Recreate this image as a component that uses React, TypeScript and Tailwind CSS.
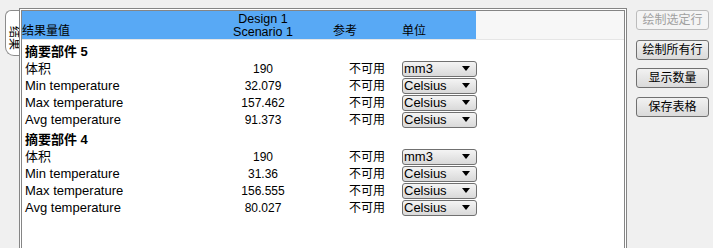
import React from 'react';

interface Row {
  name: string;
  value: string;
  unit: string;
}

interface Group {
  title: string;
  rows: Row[];
}

const groups: Group[] = [
  {
    title: '摘要部件 5',
    rows: [
      { name: '体积', value: '190', unit: 'mm3' },
      { name: 'Min temperature', value: '32.079', unit: 'Celsius' },
      { name: 'Max temperature', value: '157.462', unit: 'Celsius' },
      { name: 'Avg temperature', value: '91.373', unit: 'Celsius' },
    ],
  },
  {
    title: '摘要部件 4',
    rows: [
      { name: '体积', value: '190', unit: 'mm3' },
      { name: 'Min temperature', value: '31.36', unit: 'Celsius' },
      { name: 'Max temperature', value: '156.555', unit: 'Celsius' },
      { name: 'Avg temperature', value: '80.027', unit: 'Celsius' },
    ],
  },
];

const font = "font-['Liberation_Sans','Noto_Sans_CJK_SC',sans-serif]";

const UnitSelect: React.FC<{ value: string }> = ({ value }) => (
  <div className="flex h-[16px] w-[75px] items-center justify-between rounded-[3px] border border-[#707070] bg-gradient-to-b from-[#f4f4f4] to-[#d9d9d9] pl-[1px] pr-[6px] text-[13px] leading-none text-black">
    <span>{value}</span>
    <svg width="8" height="5" viewBox="0 0 8 5">
      <polygon points="0,0 8,0 4,5" fill="#000" />
    </svg>
  </div>
);

const SideButton: React.FC<{ label: string; disabled?: boolean }> = ({ label, disabled }) => (
  <div
    className={`flex h-[20px] w-[73px] items-center justify-center rounded-[3px] border text-[12px] leading-none ${
      disabled
        ? 'border-[#bcbcbc] bg-[#f4f4f4] text-[#a0a0a0]'
        : 'border-[#707070] bg-gradient-to-b from-[#f2f2f2] to-[#dadada] text-black'
    }`}
  >
    {label}
  </div>
);

export default function App() {
  return (
    <div className={`flex h-[248px] w-[713px] overflow-hidden bg-[#f0f0f0] ${font}`}>
      {/* vertical tab */}
      <div className="w-[19px] shrink-0 pl-[5px] pt-[10px]">
        <div className="flex h-[46px] w-[15px] items-start justify-center rounded-tl-[6px] rounded-bl-[9px] border border-r-0 border-[#8c8c8c] bg-white pt-[10px] text-[12px] leading-none [writing-mode:vertical-rl] [text-orientation:sideways]">
          结果
        </div>
      </div>

      {/* table panel */}
      <div className="mt-[8px] flex h-[260px] w-[608px] shrink-0 flex-col border-[3px] border-double border-[#858585] bg-white">
        <div className="flex h-[29px] shrink-0 border-b border-[#e6e6e6] bg-[#f7f7f7]">
          <div className="flex h-full w-[454px] items-end bg-[#58a9f5] pb-[1px] text-[12px] leading-[13px] text-black">
            <div className="w-[178px]">结果量值</div>
            <div className="flex w-[126px] flex-col items-center text-[12.5px] leading-[13px]">
              <span className="leading-[12px]">Design 1</span>
              <span className="mt-[1px] leading-[12px]">Scenario 1</span>
            </div>
            <div className="w-[75px] pl-[7px]">参考</div>
            <div className="pl-[1px]">单位</div>
          </div>
        </div>

        <div className="pt-[3px]">
          {groups.map((g, gi) => (
            <div key={gi} className={gi > 0 ? 'mt-[3px]' : ''}>
              <div className="flex h-[17px] items-center pl-[3px] text-[13px] font-bold leading-none">
                {g.title}
              </div>
              {g.rows.map((r, ri) => (
                <div key={ri} className="flex h-[17px] items-center text-[13px] leading-none">
                  <div className="w-[178px] pl-[3px]">{r.name}</div>
                  <div className="w-[126px] text-center text-[12px]">{r.value}</div>
                  <div className="w-[75px] pl-[23px] text-[12px]">不可用</div>
                  <div className="pl-[1px]">
                    <UnitSelect value={r.unit} />
                  </div>
                </div>
              ))}
            </div>
          ))}
        </div>
      </div>

      {/* buttons */}
      <div className="flex flex-col pl-[9px] pt-[10px]">
        <SideButton label="绘制选定行" disabled />
        <div className="mt-[10px]">
          <SideButton label="绘制所有行" />
        </div>
        <div className="mt-[8px]">
          <SideButton label="显示数量" />
        </div>
        <div className="mt-[9px]">
          <SideButton label="保存表格" />
        </div>
      </div>
    </div>
  );
}
